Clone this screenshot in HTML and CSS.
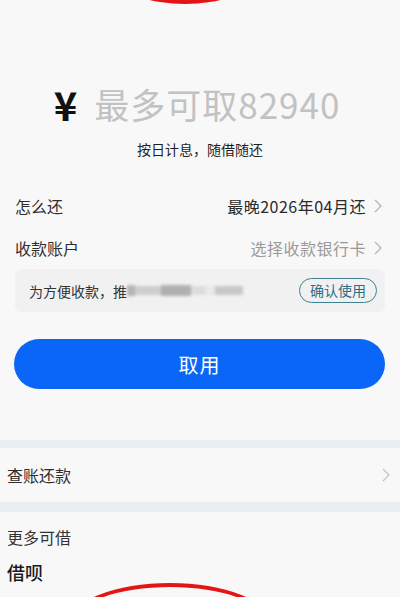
FILE: index.html
```html
<!DOCTYPE html>
<html lang="zh-CN">
<head>
<meta charset="utf-8">
<link rel="stylesheet" href="styles.css">
</head>
<body>
<div class="page">
  <div class="mark mark-top"></div>
  <section class="hero">
    <div class="amount">
      <span class="yen">¥</span>
      <span class="placeholder">最多可取82940</span>
    </div>
    <div class="subtitle">按日计息，随借随还</div>
  </section>

  <section class="form">
    <div class="row">
      <span class="label">怎么还</span>
      <span class="value dark">最晚2026年04月还
        <svg class="chev" viewBox="0 0 8 14" width="8" height="14"><polyline points="1,1 7,7 1,13" fill="none" stroke="#b5b5b5" stroke-width="1.3"/></svg>
      </span>
    </div>
    <div class="row">
      <span class="label">收款账户</span>
      <span class="value light">选择收款银行卡
        <svg class="chev" viewBox="0 0 8 14" width="8" height="14"><polyline points="1,1 7,7 1,13" fill="none" stroke="#b5b5b5" stroke-width="1.3"/></svg>
      </span>
    </div>
    <div class="tip">
      <span class="tip-text">为方便收款，推<span class="blur"><i class="b1"></i><i class="b2"></i><i class="b3"></i><i class="b4"></i><i class="b5"></i><i class="b6"></i></span></span>
      <span class="confirm">确认使用</span>
    </div>
    <button class="primary">取用</button>
  </section>

  <div class="band"></div>
  <div class="list-row">
    <span class="label">查账还款</span>
    <svg class="chev" viewBox="0 0 8 14" width="8" height="14"><polyline points="1,1 7,7 1,13" fill="none" stroke="#c4c4c4" stroke-width="1.3"/></svg>
  </div>
  <div class="band band2"></div>
  <section class="more">
    <div class="more-title">更多可借</div>
    <div class="more-item">借呗</div>
  </section>
  <div class="mark mark-bottom"></div>
</div>
</body>
</html>
```

FILE: styles.css
```css
* { box-sizing: border-box; }
html, body {
  margin: 0;
  padding: 0;
  background: #f8f8f8;
}
body {
  font-family: "Noto Sans CJK SC", "Noto Sans", sans-serif;
  color: #333;
}
.page {
  position: relative;
  width: 400px;
  height: 597px;
  overflow: hidden;
  background: #f8f8f8;
}
.mark {
  position: absolute;
  border: 4px solid #e31515;
  border-radius: 50%;
}
.mark-top {
  left: 120px;
  top: -46px;
  width: 130px;
  height: 50px;
}
.mark-bottom {
  left: 70px;
  top: 583px;
  width: 200px;
  height: 80px;
}
.hero {
  padding-top: 82px;
}
.amount {
  display: flex;
  justify-content: center;
  align-items: center;
  gap: 17px;
  height: 44px;
  padding-right: 6px;
}
.yen {
  font-size: 40px;
  font-weight: 700;
  color: #111;
  line-height: 44px;
}
.placeholder {
  font-size: 35px;
  color: #c2c2c2;
  line-height: 44px;
  letter-spacing: 1px;
}
.subtitle {
  margin-top: 13px;
  text-align: center;
  font-size: 14px;
  line-height: 20px;
  color: #1f1f1f;
  font-weight: 400;
}
.form {
  padding: 26px 15px 0;
}
.row {
  display: flex;
  justify-content: space-between;
  align-items: center;
  height: 42px;
  font-size: 16px;
}
.label {
  font-size: 16px;
  color: #2e2e2e;
}
.value {
  display: flex;
  align-items: center;
  gap: 8px;
  font-size: 16px;
}
.value.dark { color: #2a2a2a; letter-spacing: 0.5px; }
.value.light { color: #9a9a9a; letter-spacing: 0.5px; }
.chev { display: block; margin-right: 3px; }
.tip {
  display: flex;
  justify-content: space-between;
  align-items: center;
  height: 43px;
  background: #f1f1f1;
  border-radius: 6px;
  padding: 0 8px 0 14px;
}
.tip-text {
  display: flex;
  align-items: center;
  font-size: 14px;
  color: #333;
}
.blur {
  display: flex;
  align-items: center;
  filter: blur(1.5px);
  height: 14px;
}
.blur i {
  display: block;
  height: 9px;
  background: #c9c9c9;
}
.blur .b1 { width: 8px; background: #b5b5b5; height: 11px; }
.blur .b2 { width: 26px; background: #cdcdcd; }
.blur .b3 { width: 30px; background: #b0b0b0; height: 11px; }
.blur .b4 { width: 14px; background: #dcdcdc; }
.blur .b5 { width: 10px; background: #e8e8e8; }
.blur .b6 { width: 28px; background: #c8c8c8; }
.confirm {
  font-size: 14px;
  color: #2d6f86;
  border: 1.5px solid #3e8194;
  border-radius: 13px;
  height: 25px;
  line-height: 22px;
  padding: 0 10px;
}
.primary {
  display: block;
  width: 371px;
  height: 50px;
  margin: 27px 0 0 -1px;
  border: none;
  border-radius: 25px;
  background: #0a66f6;
  color: #fff;
  font-family: "Noto Sans CJK SC", "Noto Sans", sans-serif;
  font-size: 20px;
  font-weight: 400;
  letter-spacing: 1px;
}
.band {
  margin-top: 51px;
  height: 8px;
  background: #eaedf1;
}
.band2 {
  margin-top: 0;
  height: 10px;
}
.list-row {
  display: flex;
  justify-content: space-between;
  align-items: center;
  height: 54px;
  padding: 0 7px;
}
.more {
  padding: 15px 7px 0;
}
.more-title {
  font-size: 16px;
  line-height: 20px;
  color: #333;
}
.more-item {
  margin-top: 14px;
  font-size: 18px;
  font-weight: 500;
  line-height: 22px;
  color: #1a1a1a;
}
```
